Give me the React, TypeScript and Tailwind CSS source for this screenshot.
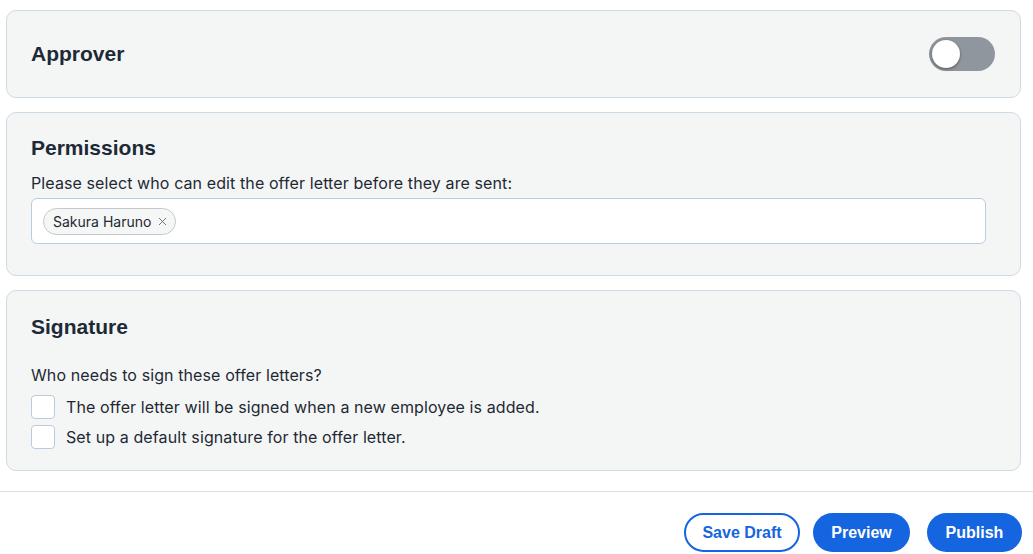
import { X } from 'lucide-react'

const heading = "font-['Liberation_Sans',Arial,sans-serif] text-[21px] font-bold leading-7 text-[#1d2a36]"
const body = "font-['Inter',sans-serif] text-[16px] leading-5 tracking-[0.1px] text-[#1f2933]"

function Checkbox({ label }: { label: string }) {
  return (
    <label className="flex items-center gap-[11px]">
      <span className="h-6 w-6 rounded-[4px] border border-[#bccbd9] bg-white" />
      <span className={body}>{label}</span>
    </label>
  )
}

export default function App() {
  return (
    <div className="flex h-[554px] w-[1033px] flex-col bg-white">
      <div className="flex flex-col gap-[14px] px-[6px] pt-[10px] pr-[12px]">
        <section className="flex h-[88px] items-center justify-between rounded-[10px] border border-[#cddbe6] bg-[#f4f6f6] pl-[24px] pr-[25px]">
          <h2 className={heading}>Approver</h2>
          <button className="flex h-[34px] w-[66px] items-center rounded-full bg-[#8f969d] px-[3px]">
            <span className="h-[28px] w-[28px] rounded-full bg-white shadow-[0_1px_3px_rgba(0,0,0,0.45)]" />
          </button>
        </section>

        <section className="flex h-[164px] flex-col rounded-[10px] border border-[#cddbe6] bg-[#f4f6f6] pl-[24px] pr-[34px] pt-[21px]">
          <h2 className={heading}>Permissions</h2>
          <p className={`${body} mt-[11px]`}>Please select who can edit the offer letter before they are sent:</p>
          <div className="mt-[5px] flex h-[46px] items-center rounded-[6px] border border-[#b9cde0] bg-white px-[11px]">
            <span className="flex h-[27px] items-center gap-[5px] rounded-full border border-[#c4c9ce] bg-[#f5f6f6] pl-[9px] pr-[6px] font-['Inter',sans-serif] text-[14px] text-[#1f2933]">
              Sakura Haruno
              <X size={13} strokeWidth={1.6} className="text-[#5b6570]" />
            </span>
          </div>
        </section>

        <section className="flex h-[181px] flex-col rounded-[10px] border border-[#cddbe6] bg-[#f4f6f6] pl-[24px] pt-[22px]">
          <h2 className={heading}>Signature</h2>
          <p className={`${body} mt-[24px]`}>Who needs to sign these offer letters?</p>
          <div className="mt-[10px] flex flex-col gap-[6px]">
            <Checkbox label="The offer letter will be signed when a new employee is added." />
            <Checkbox label="Set up a default signature for the offer letter." />
          </div>
        </section>
      </div>

      <div className="mt-[20px] border-t border-[#dcdfe2]" />

      <div className="flex justify-end gap-[13px] pr-[11px] pt-[21px] font-['Liberation_Sans',Arial,sans-serif] text-[16px] font-bold">
        <button className="h-[39px] w-[116px] rounded-full border-2 border-[#1565e0] bg-white text-[#1565e0]">Save Draft</button>
        <button className="h-[39px] w-[97px] rounded-full bg-[#1565e0] text-white">Preview</button>
        <button className="ml-[4px] h-[39px] w-[95px] rounded-full bg-[#1565e0] text-white">Publish</button>
      </div>
    </div>
  )
}
